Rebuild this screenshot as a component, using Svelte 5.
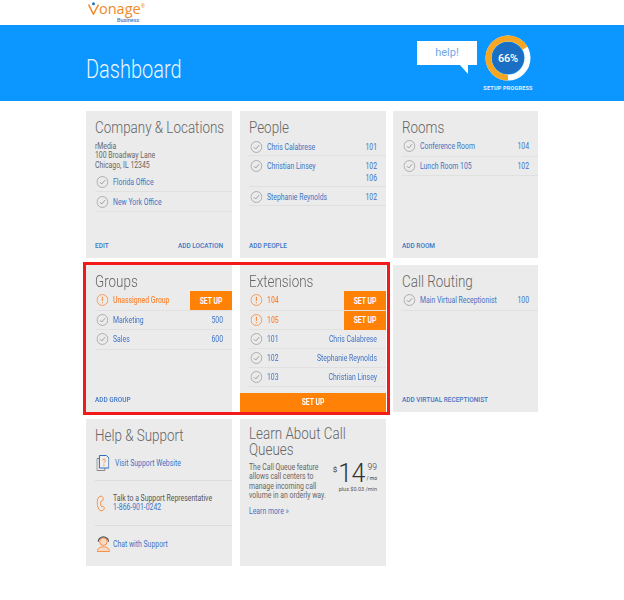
<script>
  const check = "M6.5 11.5l3.2 3.2 6.2-7";
  const people = [
    { name: "Chris Calabrese", nums: ["101"] },
    { name: "Christian Linsey", nums: ["102", "106"] },
    { name: "Stephanie Reynolds", nums: ["102"] }
  ];
  const rooms = [
    { name: "Conference Room", num: "104" },
    { name: "Lunch Room 105", num: "102" }
  ];
  const exts = [
    { num: "101", name: "Chris Calabrese" },
    { num: "102", name: "Stephanie Reynolds" },
    { num: "103", name: "Christian Linsey" }
  ];
</script>

{#snippet ok()}
  <svg class="ic" viewBox="0 0 22 22" preserveAspectRatio="none"><circle cx="11" cy="11" r="10" fill="none" stroke="#a0a0a0" stroke-width="1.500" /><path d={check} fill="none" stroke="#8c8c8c" stroke-width="1.500" /></svg>
{/snippet}
{#snippet warn()}
  <svg class="ic" viewBox="0 0 22 22" preserveAspectRatio="none"><circle cx="11" cy="11" r="10" fill="none" stroke="#f98a3c" stroke-width="1.500" /><path d="M11 5v8M11 15v2" fill="none" stroke="#f98a3c" stroke-width="2" /></svg>
{/snippet}

<header class="top">
  <div class="logo">
    <div class="brand">
      <svg width="11" height="13" viewBox="0 0 11 13"><circle cx="5.500" cy="1.800" r="1.500" fill="#1f6fc0" /><path d="M.6 2.500C2 5 3.500 9 5.500 12.200 7 9 8.800 5.500 10.500 2.500" fill="none" stroke="#ef8a2a" stroke-width="1.500" /></svg>
      <span>onage</span><i>®</i>
    </div>
    <div class="biz">Business</div>
  </div>
</header>

<section class="hero">
  <h1>Dashboard</h1>
  <div class="help">help!</div>
  <div class="progress">
    <svg width="46" height="46" viewBox="0 0 46 46">
      <circle cx="23" cy="23" r="19.500" fill="none" stroke="#fff" stroke-width="6" />
      <circle cx="23" cy="23" r="19.500" fill="none" stroke="#f5a623" stroke-width="6" stroke-dasharray="81 122.5" transform="rotate(90 23 23)" />
      <circle cx="23" cy="23" r="16" fill="#1a6fc4" />
      <text x="23" y="27" text-anchor="middle">66%</text>
    </svg>
    <div class="plabel">SETUP PROGRESS</div>
  </div>
</section>

<main class="grid">
  <div class="card"><div class="inner">
    <h2>Company &amp; Locations</h2>
    <p class="addr">rMedia<br />100 Broadway Lane<br />Chicago, IL 12345</p>
    <div class="row">{@render ok()}<a href="#a">Florida Office</a></div>
    <div class="row">{@render ok()}<a href="#a">New York Office</a></div>
    <div class="foot"><a href="#a">EDIT</a><a href="#a">ADD LOCATION</a></div>
  </div></div>

  <div class="card"><div class="inner">
    <h2>People</h2>
    {#each people as p}
      <div class="row top-align">
        {@render ok()}<a href="#a">{p.name}</a>
        <span class="num">{#each p.nums as n}<a href="#a">{n}</a>{/each}</span>
      </div>
    {/each}
    <div class="foot"><a href="#a">ADD PEOPLE</a></div>
  </div></div>

  <div class="card"><div class="inner">
    <h2>Rooms</h2>
    {#each rooms as r}
      <div class="row">{@render ok()}<a href="#a">{r.name}</a><span class="num"><a href="#a">{r.num}</a></span></div>
    {/each}
    <div class="foot"><a href="#a">ADD ROOM</a></div>
  </div></div>

  <div class="card"><div class="inner">
    <h2>Groups</h2>
    <div class="row alert">{@render warn()}<b>Unassigned Group</b><button>SET UP</button></div>
    <div class="row">{@render ok()}<a href="#a">Marketing</a><span class="num"><a href="#a">500</a></span></div>
    <div class="row">{@render ok()}<a href="#a">Sales</a><span class="num"><a href="#a">600</a></span></div>
    <div class="foot"><a href="#a">ADD GROUP</a></div>
  </div></div>

  <div class="card"><div class="inner">
    <h2>Extensions</h2>
    <div class="row alert">{@render warn()}<b>104</b><button>SET UP</button></div>
    <div class="row alert">{@render warn()}<b>105</b><button>SET UP</button></div>
    {#each exts as e}
      <div class="row tight">{@render ok()}<a href="#a">{e.num}</a><span class="num"><a href="#a">{e.name}</a></span></div>
    {/each}
    <button class="wide">SET UP</button>
  </div></div>

  <div class="card"><div class="inner">
    <h2>Call Routing</h2>
    <div class="row">{@render ok()}<a href="#a">Main Virtual Receptionist</a><span class="num"><a href="#a">100</a></span></div>
    <div class="foot"><a href="#a">ADD VIRTUAL RECEPTIONIST</a></div>
  </div></div>

  <div class="card"><div class="inner">
    <h2>Help &amp; Support</h2>
    <div class="sup first">
      <svg class="s1" viewBox="0 0 13 16" preserveAspectRatio="none"><path d="M.5 3.500h8v12h-8z" fill="none" stroke="#888" /><path d="M3 .5h7l2.500 2.500v10H3z" fill="#eee" stroke="#2f6cc0" /><path d="M6 5c.8-1.300 3-1 3 .5 0 1.200-1.500 1.300-1.500 2.800M7.500 9.500v1.500" fill="none" stroke="#f98a3c" /></svg>
      <a href="#a">Visit Support Website</a>
    </div>
    <div class="sup second">
      <svg class="s2" viewBox="0 0 10 20" preserveAspectRatio="none"><path d="M4 1.500C1 3 .5 7 1 11s2 8 5 7.500c2.500-.5 3-2.500 2.500-4-.5-1-2-1.500-3-1-1-2-1-4-.5-6 1.500 0 3-1 2.500-3C7.500 2 6 1 4 1.500z" fill="none" stroke="#f98a3c" stroke-width="1.100" /></svg>
      <div class="talk">Talk to a Support Representative<br /><a href="#a">1-866-901-0242</a></div>
    </div>
    <div class="sup third">
      <svg class="s3" viewBox="0 0 15 17" preserveAspectRatio="none"><circle cx="7.500" cy="6" r="4" fill="#f7d9c4" stroke="#f98a3c" /><path d="M2 6a5.500 5 0 0 1 11 0" fill="none" stroke="#555" stroke-width="1.300" /><path d="M1 16.500c0-3 2-5 6.500-5s6.500 2 6.500 5z" fill="#f7d9c4" stroke="#f98a3c" /></svg>
      <a href="#a">Chat with Support</a>
    </div>
  </div></div>

  <div class="card"><div class="inner">
    <h2 class="two">Learn About Call Queues</h2>
    <div class="promo">
      <p>The Call Queue feature allows call centers to manage incoming call volume in an orderly way.</p>
      <div class="price">
        <div class="amount"><span class="cur">$</span><span class="big">14</span><span class="side"><span class="cents">99</span><span class="mo">/ mo</span></span></div>
        <div class="plus">plus $0.03 /min</div>
      </div>
    </div>
    <a class="more" href="#a">Learn more »</a>
  </div></div>
</main>

<div class="highlight"></div>

<style>
  :global(body) {
    background: #fff;
    font-family: Roboto, "Liberation Sans", sans-serif;
    color: #555;
  }
  .top {
    height: 25px;
    padding: 2px 0 0 88px;
    box-sizing: border-box;
  }
  .brand {
    display: flex;
    align-items: flex-end;
    height: 13px;
    font: 400 14.500px/13px "Open Sans", sans-serif;
    color: #ef8a2a;
  }
  .brand i { font-size: 5px; line-height: 8px; align-self: flex-start; font-style: normal; }
  .biz {
    font-size: 5.500px;
    font-weight: 500;
    line-height: 7px;
    margin-top: 2px;
    color: #3b78c4;
    padding-left: 29px;
  }
  .hero {
    height: 76px;
    background: #0b97ff;
    position: relative;
    display: flex;
    align-items: center;
    padding-left: 86px;
  }
  h1 {
    margin: 12px 0 0;
    font-size: 25px;
    font-weight: 300;
    color: #eaf5ff;
    transform: scaleX(0.8);
    transform-origin: left;
  }
  .help {
    position: absolute;
    left: 417px;
    top: 16px;
    width: 60px;
    height: 24px;
    background: #fff;
    color: #6ea8ea;
    font-size: 11px;
    text-align: center;
    line-height: 24px;
  }
  .help::after {
    content: "";
    position: absolute;
    right: 9px;
    bottom: -9px;
    border-top: 9px solid #fff;
    border-left: 8px solid transparent;
  }
  .progress {
    position: absolute;
    left: 479px;
    top: 10px;
    width: 58px;
    text-align: center;
  }
  .progress svg { display: block; margin: 0 auto; }
  .progress text {
    font: 500 11px Roboto, sans-serif;
    fill: #fff;
    letter-spacing: -0.2px;
  }
  .plabel {
    font-size: 5.500px;
    font-weight: 700;
    line-height: 8px;
    margin-top: 3px;
    color: #e4f2ff;
    white-space: nowrap;
    letter-spacing: 0.2px;
  }
  .grid {
    display: grid;
    grid-template-columns: 146px 146px 145px;
    grid-auto-rows: 146.5px;
    gap: 7.5px;
    padding: 10px 0 0 86px;
  }
  .card {
    background: #ebebeb;
    overflow: hidden;
  }
  /* no condensed face is installed: the whole card is set wide and squeezed,
     so horizontal sizes below are the wanted pixels / 0.8 */
  .inner {
    width: 125%;
    height: 100%;
    box-sizing: border-box;
    padding: 7px 0 0 11.25px;
    position: relative;
    display: flex;
    flex-direction: column;
    transform: scaleX(0.8);
    transform-origin: left top;
  }
  h2 {
    margin: 0;
    font-size: 16.800px;
    line-height: 19px;
    font-weight: 300;
    color: #666;
    white-space: nowrap;
  }
  h2.two {
    white-space: normal;
    line-height: 15.500px;
    margin-bottom: 6px;
  }
  a {
    color: #3f74c4;
    text-decoration: none;
  }
  .addr {
    margin: 5px 0 3px;
    font-size: 8.600px;
    line-height: 9.330px;
    color: #666;
  }
  .row {
    display: flex;
    align-items: center;
    gap: 6.250px;
    min-height: 18.500px;
    border-bottom: 1px solid #e0e0e0;
    font-size: 8.600px;
    padding-right: 11.250px;
    position: relative;
  }
  .row.top-align { align-items: flex-start; padding-top: 4px; padding-bottom: 2px; min-height: 12px; }
  .row.top-align a { line-height: 12px; }
  .row.tight { min-height: 18px; }
  .ic {
    width: 15px;
    height: 12px;
    flex: none;
    margin-left: 1.250px;
  }
  .num {
    margin-left: auto;
    display: flex;
    flex-direction: column;
    align-items: flex-end;
  }
  .alert b {
    font-weight: 500;
    color: #f98a3c;
  }
  button {
    font-family: inherit;
    border: 0;
    background: #ff8207;
    color: #fff;
    font-weight: 700;
    font-size: 8.500px;
    padding: 0;
  }
  .alert button {
    position: absolute;
    right: 0;
    top: 0;
    width: 52.500px;
    height: 19px;
  }
  .wide {
    position: absolute;
    left: 0;
    right: 0;
    bottom: 0;
    height: 18.500px;
  }
  .foot {
    position: absolute;
    left: 11.250px;
    right: 11.250px;
    bottom: 8px;
    display: flex;
    justify-content: space-between;
    font-size: 8.100px;
    font-weight: 500;
    line-height: 9px;
  }
  .sup {
    display: flex;
    align-items: center;
    font-size: 8.600px;
    border-bottom: 1px solid #ddd;
    padding-left: 1.250px;
  }
  .sup:last-child { border: 0; }
  .first { height: 35px; gap: 7.500px; }
  .second { height: 44px; gap: 10px; }
  .third { height: 36px; gap: 3.750px; }
  .s1 { width: 16.250px; height: 16px; flex: none; }
  .s2 { width: 11.250px; height: 17px; flex: none; }
  .s3 { width: 17.500px; height: 16px; flex: none; }
  .talk { line-height: 9.500px; color: #555; }
  .promo {
    display: flex;
    justify-content: space-between;
    padding-right: 11.250px;
  }
  .promo p {
    margin: 0;
    width: 100px;
    font-size: 8.600px;
    line-height: 9.400px;
    color: #666;
  }
  .price {
    text-align: right;
    transform: scaleX(1.25);
    transform-origin: right top;
  }
  .amount {
    display: flex;
    align-items: flex-start;
    justify-content: flex-end;
    color: #333;
  }
  .cur { font-size: 8px; padding-top: 2px; }
  .big {
    font-size: 25px;
    font-weight: 300;
    line-height: 22px;
    margin: 0 0 0 1px;
    letter-spacing: -0.5px;
  }
  .side {
    display: flex;
    flex-direction: column;
    width: 12px;
  }
  .cents { font-size: 8.500px; line-height: 9px; font-weight: 300; }
  .mo { font-size: 5px; line-height: 13px; text-align: right; }
  .plus {
    font-size: 5.500px;
    line-height: 8px;
    color: #555;
    white-space: nowrap;
  }
  .more {
    font-size: 8.600px;
    line-height: 11px;
    margin-top: 5px;
  }
  .highlight {
    position: absolute;
    left: 83px;
    top: 262px;
    width: 301px;
    height: 147px;
    border: 3px solid #f31a1a;
    pointer-events: none;
  }
</style>
